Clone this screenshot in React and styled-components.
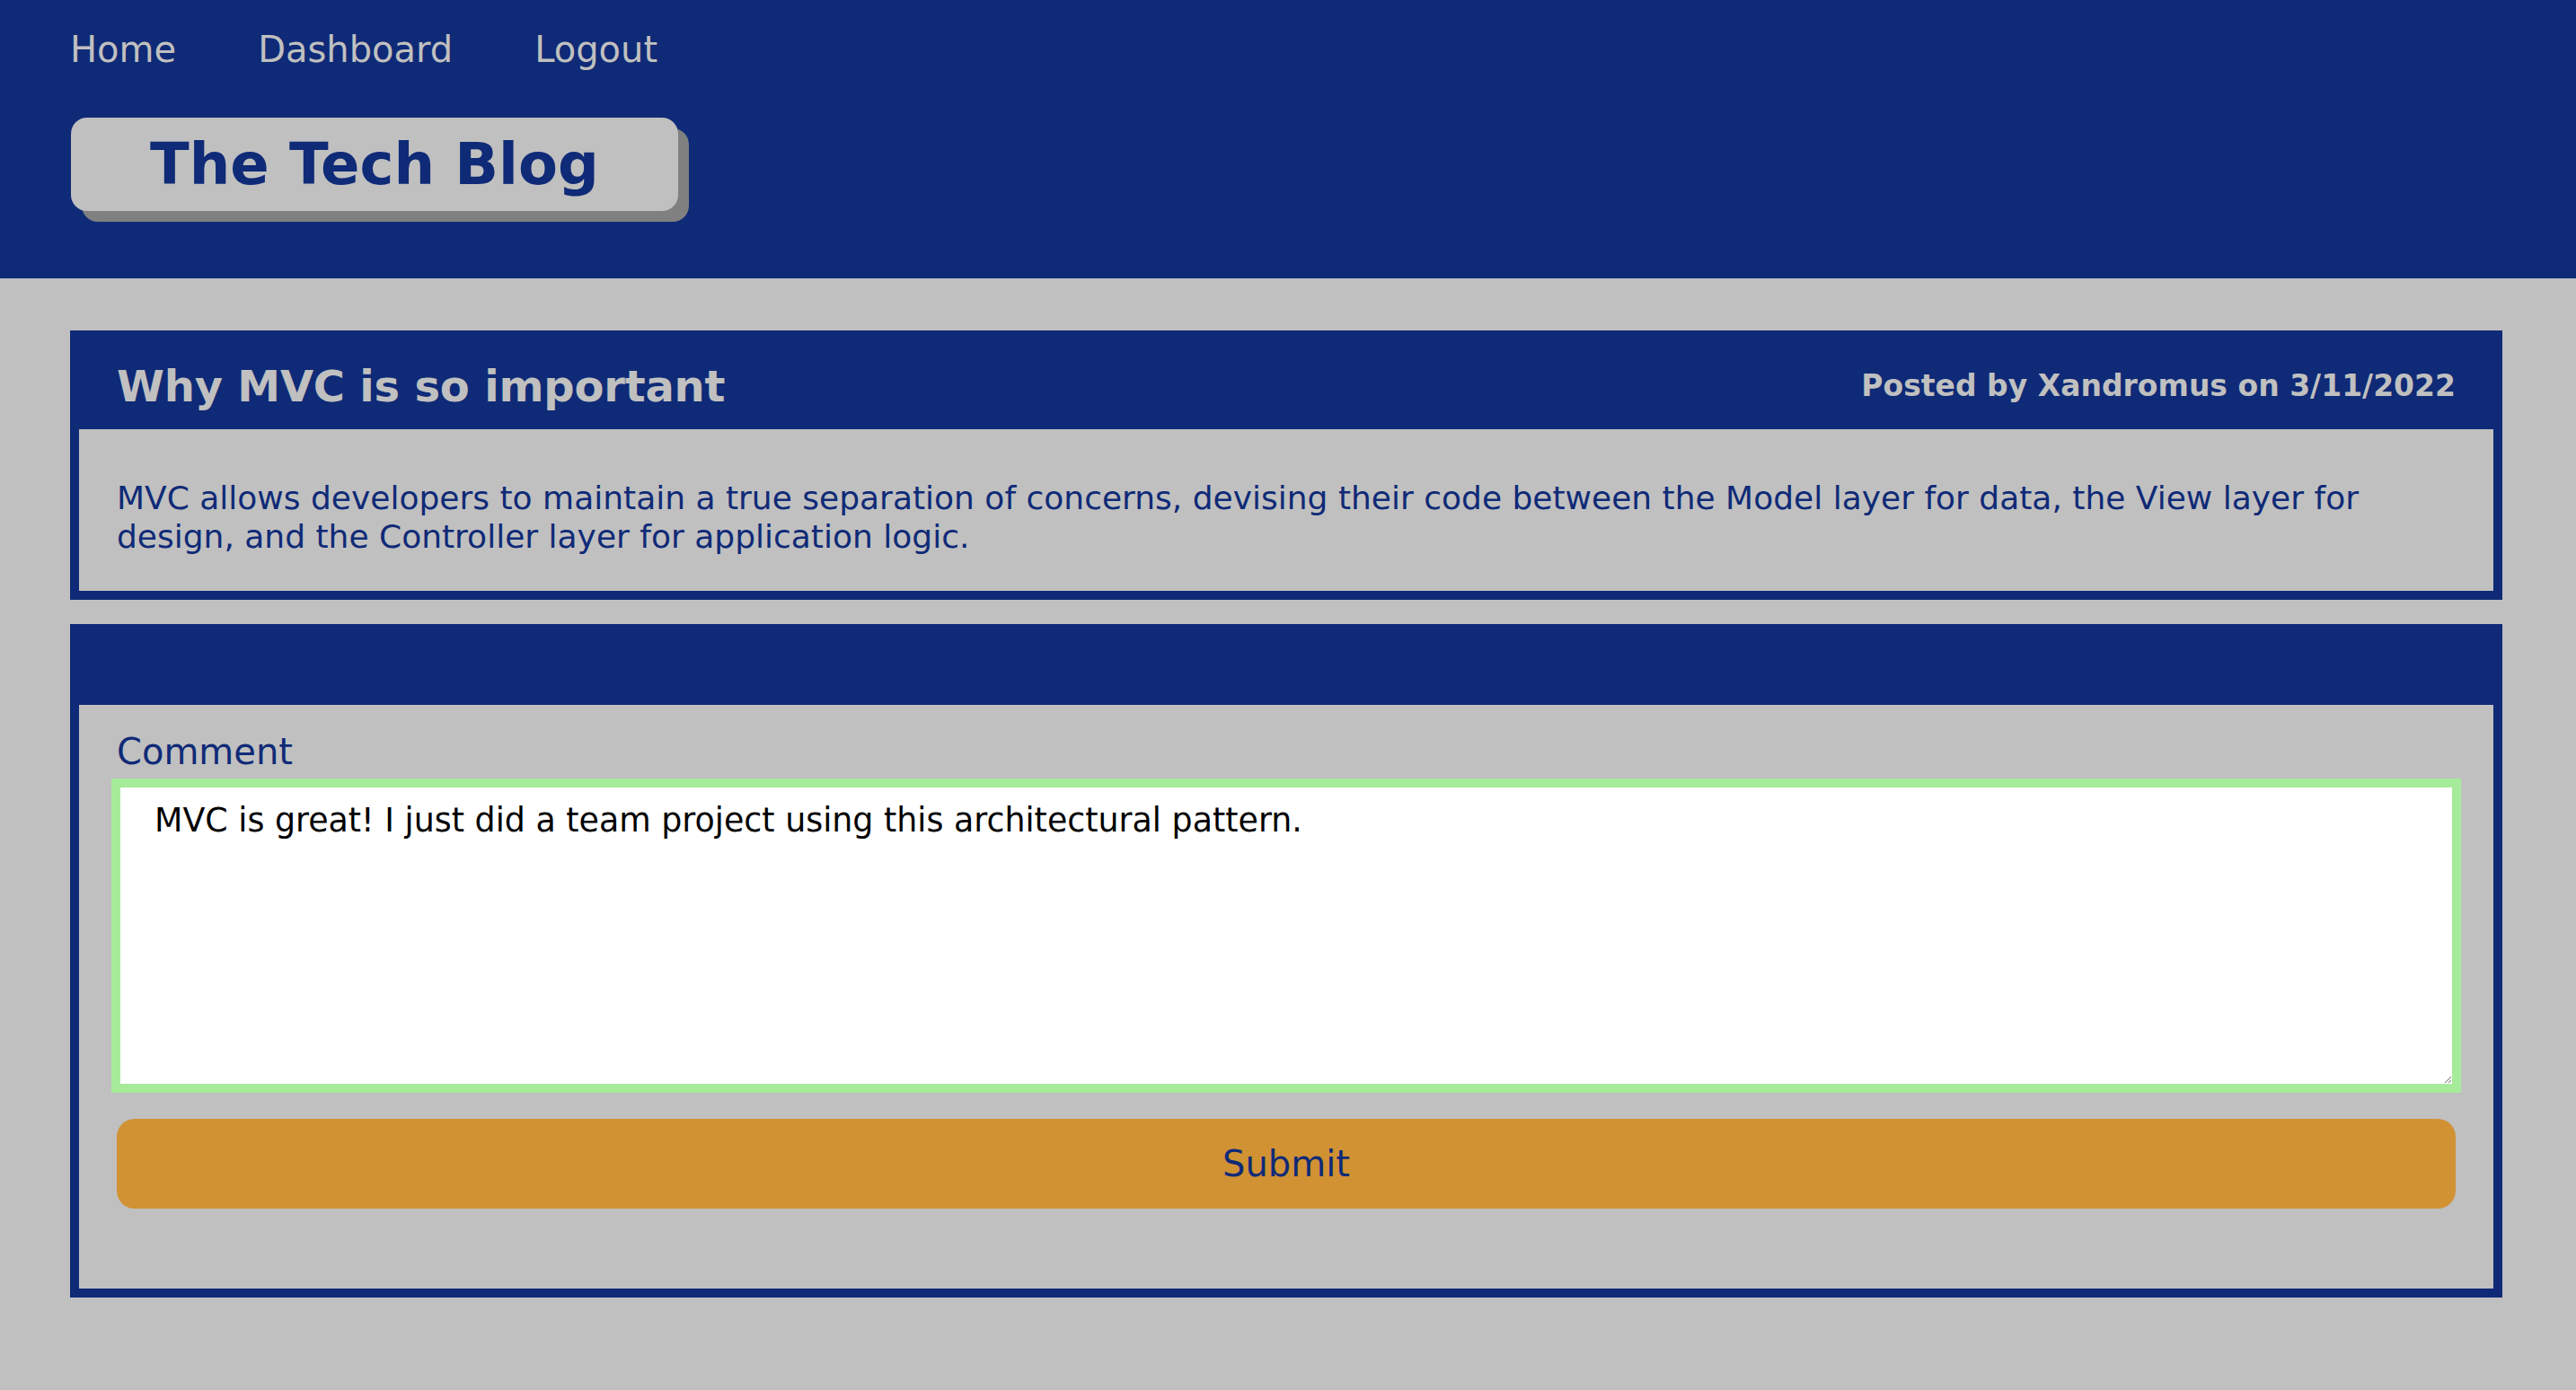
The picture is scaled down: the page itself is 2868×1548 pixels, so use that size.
import styled, { createGlobalStyle } from "styled-components"

const navy = "#0f2a77"
const silver = "#c0c0c0"

const GlobalStyle = createGlobalStyle`
body {
  margin: 0;
  background: ${silver};
  font-family: "DejaVu Sans", Verdana, sans-serif;
}
`

const App = () => {
    return (
<Page>
    <GlobalStyle />
    <Header>
        <Nav>
            <NavLink href="#">Home</NavLink>
            <NavLink href="#">Dashboard</NavLink>
            <NavLink href="#">Logout</NavLink>
        </Nav>
        <Brand>The Tech Blog</Brand>
    </Header>
    <Main>
        <Card>
            <PostHeader>
                <PostTitle>Why MVC is so important</PostTitle>
                <PostMeta>Posted by Xandromus on 3/11/2022</PostMeta>
            </PostHeader>
            <PostBody>
                MVC allows developers to maintain a true separation of concerns, devising their code between the Model layer for data, the View layer for design, and the Controller layer for application logic.
            </PostBody>
        </Card>
        <Card>
            <EmptyHeader />
            <CommentForm onSubmit={e => e.preventDefault()}>
                <Label htmlFor="comment">Comment</Label>
                <CommentBox
                    id="comment"
                    defaultValue="MVC is great! I just did a team project using this architectural pattern."
                />
                <SubmitButton type="submit">Submit</SubmitButton>
            </CommentForm>
        </Card>
    </Main>
</Page>
    )
}

const Page = styled.div`
min-height: 100vh;
background: ${silver};
`
const Header = styled.header`
box-sizing: border-box;
height: 310px;
background: ${navy};
padding: 32px 0 0 78px;
`
const Nav = styled.nav`
display: flex;
gap: 91px;
`
const NavLink = styled.a`
color: ${silver};
text-decoration: none;
font-size: 40px;
line-height: 46px;
`
const Brand = styled.h1`
display: inline-block;
margin: 53px 0 0 1px;
height: 104px;
line-height: 104px;
padding: 0 88px;
background: ${silver};
color: ${navy};
font-size: 64px;
font-weight: bold;
border-radius: 18px;
box-shadow: 12px 12px 0 #808080;
`
const Main = styled.main`
display: flex;
flex-direction: column;
gap: 27px;
padding: 58px 82px 0 78px;
`
const Card = styled.section`
border: 10px solid ${navy};
background: ${silver};
`
const PostHeader = styled.div`
box-sizing: border-box;
height: 100px;
padding: 3px 42px 0;
background: ${navy};
display: flex;
align-items: center;
justify-content: space-between;
color: ${silver};
font-weight: bold;
`
const PostTitle = styled.h2`
margin: 0;
font-size: 48px;
letter-spacing: -0.2px;
`
const PostMeta = styled.span`
font-size: 33px;
`
const PostBody = styled.p`
margin: 0;
padding: 55px 42px 39px;
color: ${navy};
font-size: 36px;
line-height: 43px;
`
const EmptyHeader = styled.div`
height: 80px;
background: ${navy};
`
const CommentForm = styled.form`
display: flex;
flex-direction: column;
padding: 29px 42px 89px;
`
const Label = styled.label`
color: ${navy};
font-size: 40px;
line-height: 46px;
margin-bottom: 13px;
`
const CommentBox = styled.textarea`
box-sizing: border-box;
display: block;
width: 100%;
height: 338px;
margin: 0;
padding: 15px 38px;
border: 4px solid #a6eb9a;
outline: 6px solid #a6eb9a;
background: #fff;
color: #000;
font-family: "DejaVu Sans", Verdana, sans-serif;
font-size: 36.4px;
`
const SubmitButton = styled.button`
margin-top: 35px;
height: 100px;
border: none;
border-radius: 20px;
background: #d19234;
color: ${navy};
font-family: "DejaVu Sans", Verdana, sans-serif;
font-size: 40px;
cursor: pointer;
`
export default App
